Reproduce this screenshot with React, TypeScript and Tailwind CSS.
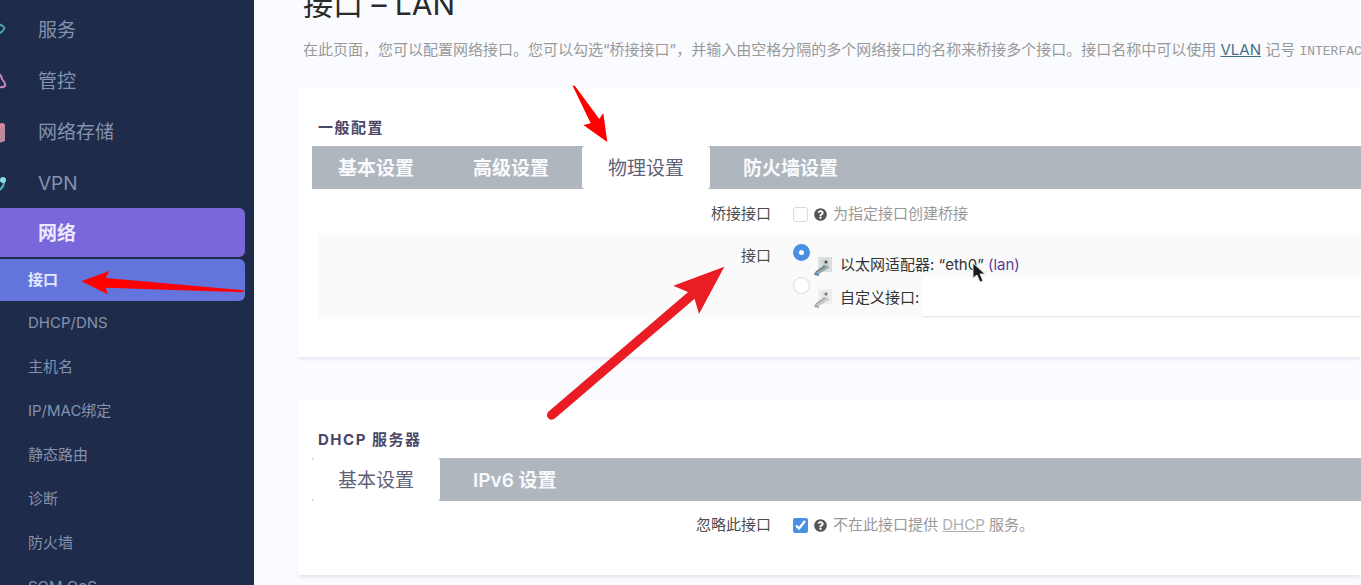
import { useState } from "react";
import type { ReactNode } from "react";
import { FaQuestionCircle } from "react-icons/fa";

const mainMenu = ["服务", "管控", "网络存储", "VPN"];
const subMenu = ["DHCP/DNS", "主机名", "IP/MAC绑定", "静态路由", "诊断", "防火墙", "SQM QoS"];

function MenuIcon({ name }: { name: string }) {
  return (
    <svg width="8" height="24" viewBox="0 0 8 24" fill="none" strokeWidth="2" className="shrink-0">
      {name === "服务" && <path d="M-4 4 L1 6 Q5 8 4 10 Q3 13 -3 15" stroke="#4ba3b5" />}
      {name === "管控" && <path d="M-2 3 Q1 5 2 9 Q6 14 5 16 Q3 18 -3 17" stroke="#c58bb8" />}
      {name === "网络存储" && (
        <>
          <path d="M-4 4 L3 2 L5 4 L5 20 L-1 22 Z" fill="#bd8a9c" />
          <path d="M-2 4 L2 2 L5 4 L0 6 Z" fill="#e58a99" />
        </>
      )}
      {name === "VPN" && (
        <>
          <path d="M4 8 Q5 15 -2 19" stroke="#4db3bd" />
          <circle cx="3" cy="8" r="3" fill="#7fe0e3" />
        </>
      )}
    </svg>
  );
}

function Sidebar() {
  return (
    <aside className="w-[254px] shrink-0 overflow-hidden bg-[#1e2b4a] pt-1 pr-[9px] text-[#8492b0]">
      <nav>
        {mainMenu.map((item) => (
          <a key={item} href="#" className="flex h-[51px] items-center gap-[30px] pt-[3px] text-[19px]">
            <MenuIcon name={item} />
            {item}
          </a>
        ))}
        <a href="#" className="flex h-[49px] items-center rounded-r-md bg-[#7967dc] pt-[3px] pl-[38px] text-[19px] font-bold text-[#ece8ff]">
          网络
        </a>
        <a href="#" className="mt-[2px] flex h-[42px] items-center rounded-r-md bg-[#6375dc] pl-7 text-[15px] font-bold text-[#e4e8ff]">
          接口
        </a>
        {subMenu.map((item) => (
          <a key={item} href="#" className="flex h-11 items-center pt-px pl-7 text-[15px]">
            {item}
          </a>
        ))}
      </nav>
    </aside>
  );
}

function Tabs({ items, initial }: { items: string[]; initial: string }) {
  const [active, setActive] = useState(initial);
  return (
    <div className="ml-[14px] flex h-[43px] gap-[7px] bg-[#b0b6be] text-[19px] whitespace-nowrap">
      {items.map((item) => (
        <button
          key={item}
          type="button"
          onClick={() => setActive(item)}
          className={
            item === active
              ? "rounded-[3px] bg-white px-[26px] pt-1 text-[#5f5f78]"
              : "px-[26px] pt-1 font-semibold text-[#f8fafc]"
          }
        >
          {item}
        </button>
      ))}
    </div>
  );
}

function Section({ title, children }: { title: string; children: ReactNode }) {
  return (
    <section className="bg-white pt-7 shadow-[0_3px_3px_-1px_rgba(120,125,150,0.18)]">
      <h2 className="mb-[6px] pl-5 text-[15px] leading-6 font-bold tracking-widest text-[#4a4766]">{title}</h2>
      {children}
    </section>
  );
}

function HelpIcon() {
  return <FaQuestionCircle size={13} className="shrink-0 text-[#555]" />;
}

function AdapterIcon({ muted }: { muted?: boolean }) {
  return (
    <svg width="18" height="20" viewBox="0 0 18 20" className="shrink-0">
      <rect x="4" y="1" width="14" height="15" fill={muted ? "#eeeeee" : "#dcdfe0"} />
      <path d="M7 4 L14 3 L15 10 L8 11 Z" fill={muted ? "#e2e2e2" : "#cdd2d2"} />
      <path d="M1 16 L10 9 L16 11 L5 18 Z" fill={muted ? "#c4c9c8" : "#93a5ae"} />
      <path d="M1 16 L5 18 L5 20 L0 19 Z" fill={muted ? "#aaaaaa" : "#5a87b5"} />
      <path d="M2 16 L11 10" stroke={muted ? "#999999" : "#666f73"} strokeWidth="1" />
      <circle cx="12" cy="6" r="1.5" fill={muted ? "#777777" : "#4a4a4a"} />
    </svg>
  );
}

function Pointer() {
  return (
    <svg width="14" height="22" viewBox="0 0 14 22" className="absolute top-[18px] left-[158px]">
      <path d="M1 1 L1 16 L5 13 L8 20 L11 19 L8 12 L13 12 Z" fill="#1a1a1a" stroke="#dddddd" strokeWidth="1" />
    </svg>
  );
}

// red marker arrows drawn over the page
function Arrows() {
  return (
    <svg width="760" height="440" viewBox="0 0 760 440" className="pointer-events-none absolute top-0 left-0">
      <path d="M572.5 85.5 L575 86 L599.3 119 L603.3 113 L607.3 142 L583.3 125 L590.7 123.3 Z" fill="#ff0000" />
      <path d="M81.3 281.3 L109.3 271 L105.7 278 L243.5 290.3 L243.5 292.3 L105.7 287.7 L107.7 294.3 Z" fill="#ff0000" />
      <path d="M551.7 415 L693 294" stroke="#ea1c24" strokeWidth="9.5" strokeLinecap="round" />
      <path d="M724.3 266.7 L673.3 285.7 L687.3 291.7 L694.7 299.3 L699 314 Z" fill="#ea1c24" />
    </svg>
  );
}

export default function App() {
  const [bridge, setBridge] = useState(false);
  const [device, setDevice] = useState("eth0");
  const [custom, setCustom] = useState("");
  const [ignore, setIgnore] = useState(true);

  return (
    <div className="relative flex h-screen overflow-hidden bg-[#fafbfe] font-[Inter,'Noto_Sans_CJK_SC',sans-serif] text-[15px] text-[#4d4d4d]">
      <Sidebar />
      <main className="min-w-0 flex-1 overflow-hidden pl-11">
        <h1 className="-mt-4 pl-[5px] text-[30px] leading-10 text-[#2b2b2b]">接口 – LAN</h1>
        <p className="mt-[14px] mb-6 pl-[5px] leading-6 whitespace-nowrap text-[#999]">
          在此页面，您可以配置网络接口。您可以勾选“桥接接口”，并输入由空格分隔的多个网络接口的名称来桥接多个接口。接口名称中可以使用{" "}
          <a href="#" className="text-[#42708c] underline">VLAN</a> 记号{" "}
          <code className="font-['Liberation_Mono',monospace] text-[13px]">INTERFACE.VLANNR</code>
        </p>

        <Section title="一般配置">
          <Tabs items={["基本设置", "高级设置", "物理设置", "防火墙设置"]} initial="物理设置" />
          <div className="ml-5 flex h-11 items-center gap-[22px] pt-[6px]">
            <label htmlFor="bridge" className="w-[453px] shrink-0 text-right">桥接接口</label>
            <div className="flex items-center gap-[6px] text-[#999]">
              <input
                id="bridge"
                type="checkbox"
                checked={bridge}
                onChange={(e) => setBridge(e.target.checked)}
                className="size-[15px] appearance-none rounded-[3px] border border-[#dadada] bg-white checked:bg-[#4f94e6]"
              />
              <HelpIcon />
              <span>为指定接口创建桥接</span>
            </div>
          </div>
          <div className="ml-5 flex gap-[22px] bg-[#fafafa] pt-[11px] pb-[2px]">
            <span id="device-label" className="w-[453px] shrink-0 text-right leading-6">接口</span>
            <div role="radiogroup" aria-labelledby="device-label" className="min-w-0 flex-1">
              <div className="relative z-10 flex h-[33px] gap-1">
                <input
                  id="eth0"
                  type="radio"
                  name="device"
                  checked={device === "eth0"}
                  onChange={() => setDevice("eth0")}
                  className="size-[17px] appearance-none rounded-full border border-[#dadada] bg-white checked:border-[6px] checked:border-[#4a90e2]"
                />
                <label htmlFor="eth0" className="relative flex items-center gap-2 pt-[10px] text-[#333]">
                  <AdapterIcon />
                  <span>
                    以太网适配器: “eth0” <a href="#" className="text-[#5b3c94]">(lan)</a>
                  </span>
                  <Pointer />
                </label>
              </div>
              <div className="flex h-10 gap-1">
                <input
                  id="custom"
                  type="radio"
                  name="device"
                  checked={device === "custom"}
                  onChange={() => setDevice("custom")}
                  className="size-[17px] appearance-none rounded-full border border-[#dadada] bg-white checked:border-[6px] checked:border-[#4a90e2]"
                />
                <label htmlFor="custom" className="flex items-center gap-2 pt-[2px] text-[#333]">
                  <AdapterIcon muted />
                  自定义接口:
                </label>
                <input
                  type="text"
                  aria-label="自定义接口"
                  value={custom}
                  onChange={(e) => setCustom(e.target.value)}
                  className="min-w-0 flex-1 border-b border-[#e6e6e6] bg-white px-2 outline-none"
                />
              </div>
            </div>
          </div>
          <div className="h-[38px]" />
        </Section>

        <div className="h-[43px]" />

        <Section title="DHCP 服务器">
          <Tabs items={["基本设置", "IPv6 设置"]} initial="基本设置" />
          <div className="ml-5 flex h-[74px] gap-[22px] pt-3">
            <label htmlFor="ignore" className="w-[453px] shrink-0 text-right leading-6">忽略此接口</label>
            <div className="flex h-6 items-center gap-[6px] text-[#999]">
              <input
                id="ignore"
                type="checkbox"
                checked={ignore}
                onChange={(e) => setIgnore(e.target.checked)}
                className="size-[15px] accent-[#4a90e2]"
              />
              <HelpIcon />
              <span>
                不在此接口提供 <a href="#" className="text-[#b0b0b0] underline">DHCP</a> 服务。
              </span>
            </div>
          </div>
        </Section>
      </main>
      <Arrows />
    </div>
  );
}
